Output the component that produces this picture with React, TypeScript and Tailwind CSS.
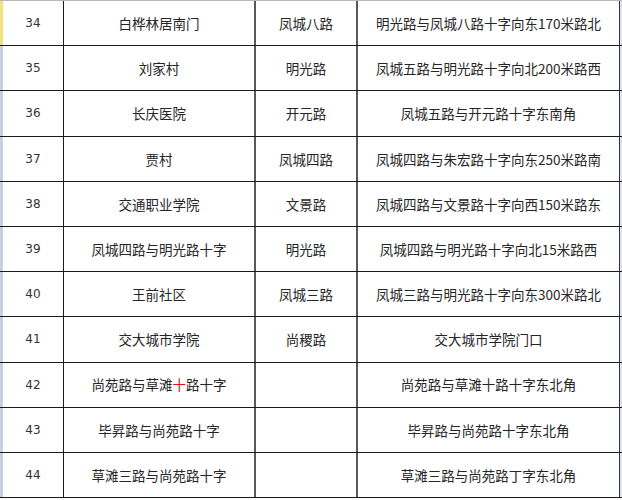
import React from "react";

type Row = { n: string; name: React.ReactNode; road: string; loc: string };

const rows: Row[] = [
  { n: "34", name: "白桦林居南门", road: "凤城八路", loc: "明光路与凤城八路十字向东170米路北" },
  { n: "35", name: "刘家村", road: "明光路", loc: "凤城五路与明光路十字向北200米路西" },
  { n: "36", name: "长庆医院", road: "开元路", loc: "凤城五路与开元路十字东南角" },
  { n: "37", name: "贾村", road: "凤城四路", loc: "凤城四路与朱宏路十字向东250米路南" },
  { n: "38", name: "交通职业学院", road: "文景路", loc: "凤城四路与文景路十字向西150米路东" },
  { n: "39", name: "凤城四路与明光路十字", road: "明光路", loc: "凤城四路与明光路十字向北15米路西" },
  { n: "40", name: "王前社区", road: "凤城三路", loc: "凤城三路与明光路十字向东300米路北" },
  { n: "41", name: "交大城市学院", road: "尚稷路", loc: "交大城市学院门口" },
  {
    n: "42",
    name: (
      <>
        尚苑路与草滩<span className="text-[#e01010]">十</span>路十字
      </>
    ),
    road: "",
    loc: "尚苑路与草滩十路十字东北角",
  },
  { n: "43", name: "毕昇路与尚苑路十字", road: "", loc: "毕昇路与尚苑路十字东北角" },
  { n: "44", name: "草滩三路与尚苑路十字", road: "", loc: "草滩三路与尚苑路丁字东北角" },
];

export default function App() {
  return (
    <div
      className="w-[622px] h-[500px] overflow-hidden bg-white text-[#262626]"
      style={{ fontFamily: '"Noto Sans CJK SC", "DejaVu Sans", sans-serif' }}
    >
      <div className="border-t border-[#b8b8b8]">
        {rows.map((r, i) => (
          <div
            key={r.n}
            className="grid grid-cols-[3px_61px_192px_102px_262px_1fr] h-[45.2px] border-b border-[#1a1a1a]"
          >
            <div className={i === 0 ? "bg-[#f2e27e]" : "bg-[#c5d0e0]"} />
            <div
              className="flex items-center justify-center border-r border-[#1a1a1a] text-[12px] text-[#333]"
              style={{ fontFamily: '"DejaVu Sans", sans-serif' }}
            >
              {r.n}
            </div>
            <div className="flex items-center justify-center border-r-2 border-[#5a5a5a] text-[13.5px]">
              {r.name}
            </div>
            <div className="flex items-center justify-center border-r-2 border-[#5a5a5a] text-[13.5px]">
              {r.road}
            </div>
            <div className="flex items-center justify-center border-r border-[#333] text-[13.5px] tracking-[0px]">
              {r.loc}
            </div>
            <div className="bg-[#dde3ec]" />
          </div>
        ))}
      </div>
    </div>
  );
}
